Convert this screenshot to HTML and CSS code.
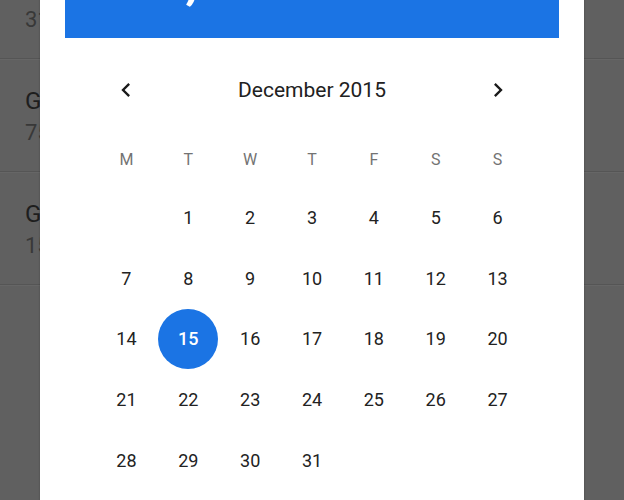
FILE: index.html
```html
<!DOCTYPE html>
<html lang="en">
<head>
<meta charset="utf-8">
<title>Date picker</title>
<link rel="stylesheet" href="styles.css">
</head>
<body>
<div class="screen">
  <ul class="list">
    <li class="item"><div class="primary">Gas station</div><div class="secondary">31.40</div></li>
    <li class="item"><div class="primary">Groceries</div><div class="secondary">75.20</div></li>
    <li class="item"><div class="primary">Gym</div><div class="secondary">15.00</div></li>
  </ul>

  <div class="dialog">
    <div class="header">
      <div class="date">Tue, Dec 15</div>
    </div>

    <div class="nav">
      <button class="arrow" aria-label="Previous month">
        <svg viewBox="0 0 24 24" width="28" height="28"><path d="M15.41 7.41L14 6l-6 6 6 6 1.41-1.41L10.83 12z"/></svg>
      </button>
      <div class="month">December 2015</div>
      <button class="arrow" aria-label="Next month">
        <svg viewBox="0 0 24 24" width="28" height="28"><path d="M8.59 16.59L10 18l6-6-6-6-1.41 1.41L13.17 12z"/></svg>
      </button>
    </div>

    <div class="weekdays">
      <span>M</span><span>T</span><span>W</span><span>T</span><span>F</span><span>S</span><span>S</span>
    </div>

    <div class="days">
      <span></span><span>1</span><span>2</span><span>3</span><span>4</span><span>5</span><span>6</span>
      <span>7</span><span>8</span><span>9</span><span>10</span><span>11</span><span>12</span><span>13</span>
      <span>14</span><span><b class="selected">15</b></span><span>16</span><span>17</span><span>18</span><span>19</span><span>20</span>
      <span>21</span><span>22</span><span>23</span><span>24</span><span>25</span><span>26</span><span>27</span>
      <span>28</span><span>29</span><span>30</span><span>31</span><span></span><span></span><span></span>
    </div>
  </div>
</div>
</body>
</html>
```

FILE: styles.css
```css
html, body {
  margin: 0;
  padding: 0;
}

body {
  background: #606060;
  font-family: Roboto, "Liberation Sans", sans-serif;
  overflow: hidden;
}

.screen {
  position: relative;
  width: 624px;
  height: 500px;
  overflow: hidden;
}

.list {
  list-style: none;
  margin: -54px 0 0 0;
  padding: 0;
}

.item {
  padding: 27px 25px 23px;
  border-bottom: 1px solid #555555;
  box-shadow: 0 1px 0 #666666;
}

.primary {
  font-size: 24px;
  line-height: 31px;
  color: #1e1e1e;
}

.secondary {
  font-size: 22px;
  line-height: 31px;
  color: #383838;
}

.dialog {
  position: absolute;
  left: 40px;
  top: -100px;
  width: 544px;
  height: 640px;
  background: #ffffff;
  box-shadow: 0 0 2px rgba(0, 0, 0, 0.25);
}

.header {
  margin: 0 25px;
  height: 138px;
  box-sizing: border-box;
  background: #1b74e4;
  color: #ffffff;
  display: flex;
  flex-direction: column;
  justify-content: flex-end;
  padding: 0 24px 30px;
}

.date {
  font-size: 58px;
  line-height: 60px;
  font-weight: 500;
  white-space: nowrap;
}

.nav {
  width: 433px;
  margin: 24px auto 0;
  height: 56px;
  display: grid;
  grid-template-columns: 1fr 5fr 1fr;
  align-items: center;
}

.arrow {
  background: none;
  border: 0;
  padding: 0;
  display: flex;
  justify-content: center;
  align-items: center;
  fill: #1a1a1a;
}

.arrow svg {
  display: block;
}

.month {
  text-align: center;
  font-size: 21px;
  color: #212121;
}

.weekdays {
  width: 433px;
  margin: 22px auto 0;
  display: grid;
  grid-template-columns: repeat(7, 1fr);
  height: 40px;
  line-height: 40px;
  text-align: center;
  font-size: 16px;
  color: #737373;
}

.days {
  width: 433px;
  margin: 7px auto 0;
  display: grid;
  grid-template-columns: repeat(7, 1fr);
  grid-auto-rows: 60.75px;
  font-size: 18px;
  color: #222222;
}

.days span {
  display: flex;
  justify-content: center;
  align-items: center;
}

.selected {
  width: 60px;
  height: 60px;
  border-radius: 50%;
  background: #1b74e4;
  color: #ffffff;
  font-weight: 500;
  display: flex;
  justify-content: center;
  align-items: center;
}
```
